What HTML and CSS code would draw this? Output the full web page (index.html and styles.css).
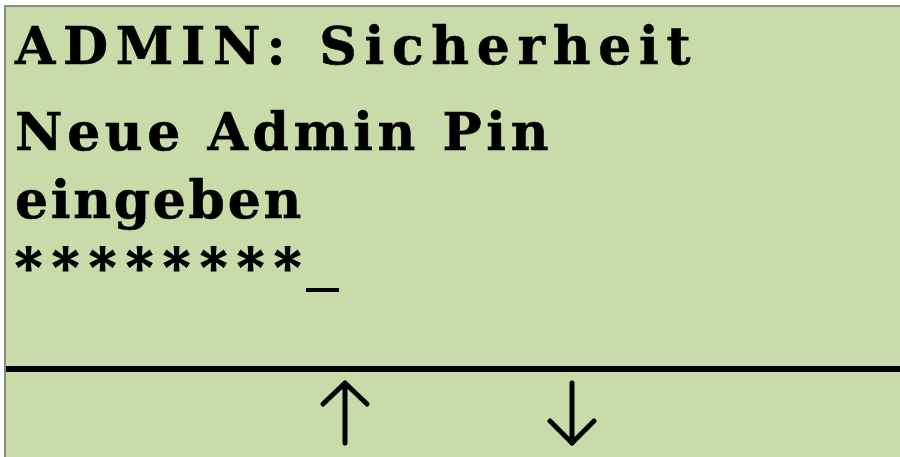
FILE: index.html
```html
<!DOCTYPE html>
<html lang="de">
<head>
<meta charset="utf-8">
<title>ADMIN: Sicherheit</title>
<link rel="stylesheet" href="styles.css">
</head>
<body>
<div class="screen">
  <div class="display">
    <div class="title">ADMIN: Sicherheit</div>
    <div class="lines">
      <div class="line line-a">Neue Admin Pin</div>
      <div class="line line-b">eingeben</div>
      <div class="line pin">********<span class="cursor"></span></div>
    </div>
  </div>
  <div class="divider"></div>
  <div class="footer">
    <svg class="arrow up" width="50" height="66" viewBox="0 0 50 66" aria-label="hoch">
      <path d="M25 3 V63 M3 24 L25 3 L47 24" fill="none" stroke="#000" stroke-width="5" stroke-linecap="round" stroke-linejoin="round"/>
    </svg>
    <svg class="arrow down" width="50" height="66" viewBox="0 0 50 66" aria-label="runter">
      <path d="M25 3 V63 M3 41 L25 63 L47 41" fill="none" stroke="#000" stroke-width="5" stroke-linecap="round" stroke-linejoin="round"/>
    </svg>
  </div>
</div>
</body>
</html>
```
FILE: styles.css
```css
html, body {
  margin: 0;
  padding: 0;
  background: #ffffff;
}

body {
  width: 900px;
  height: 457px;
  overflow: hidden;
}

.screen {
  margin: 5px 0 0 4px;
  height: 452px;
  background: #cbdaa9;
  border-top: 2px solid #8a8a8a;
  border-left: 2px solid #8a8a8a;
  display: flex;
  flex-direction: column;
  box-sizing: border-box;
}

.display {
  height: 359px;
  box-sizing: border-box;
  padding: 5px 0 0 9px;
  font-family: "DejaVu Serif", "Liberation Serif", serif;
  font-weight: bold;
  font-size: 52px;
  color: #000;
  -webkit-text-stroke: 0.6px #000;
}

.title {
  line-height: 68px;
  height: 68px;
  white-space: nowrap;
  letter-spacing: 7.7px;
}

.lines {
  margin-top: 18px;
}

.line {
  line-height: 68px;
  height: 68px;
  white-space: nowrap;
}

.line-a {
  letter-spacing: 4.6px;
}

.line-b {
  letter-spacing: 2.7px;
}

.pin {
  letter-spacing: 9.8px;
  -webkit-text-stroke: 1.2px #000;
}

.cursor {
  display: inline-block;
  width: 33px;
  height: 4px;
  margin-left: -5px;
  background: #000;
  vertical-align: -6px;
}

.divider {
  height: 6px;
  background: #000;
}

.footer {
  flex: 1;
  display: flex;
  align-items: flex-start;
  padding: 8px 0 0 314px;
  gap: 177px;
}

.arrow {
  display: block;
}
```
